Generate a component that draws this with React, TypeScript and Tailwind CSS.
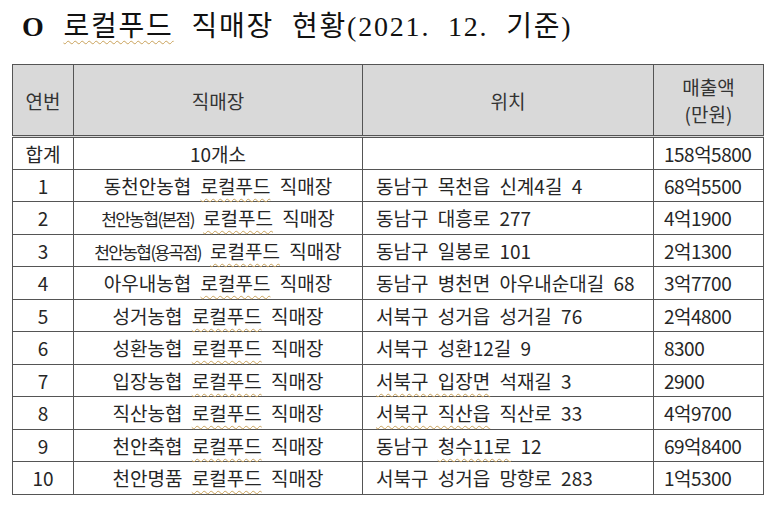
type Row = {
  no: string;
  name: string[]; // parts; index 1 is the squiggly one
  tight?: boolean;
  addr: { text: string; wavy?: boolean }[];
  sales: string;
};

const rows: Row[] = [
  { no: "1", name: ["동천안농협", "로컬푸드", "직매장"], addr: [{ text: "동남구 목천읍 신계4길 4" }], sales: "68억5500" },
  { no: "2", name: ["천안농협(본점)", "로컬푸드", "직매장"], tight: true, addr: [{ text: "동남구 대흥로 277" }], sales: "4억1900" },
  { no: "3", name: ["천안농협(용곡점)", "로컬푸드", "직매장"], tight: true, addr: [{ text: "동남구 일봉로 101" }], sales: "2억1300" },
  { no: "4", name: ["아우내농협", "로컬푸드", "직매장"], addr: [{ text: "동남구 병천면 아우내순대길 68" }], sales: "3억7700" },
  { no: "5", name: ["성거농협", "로컬푸드", "직매장"], addr: [{ text: "서북구 성거읍 성거길 76" }], sales: "2억4800" },
  { no: "6", name: ["성환농협", "로컬푸드", "직매장"], addr: [{ text: "서북구 성환12길 9" }], sales: "8300" },
  { no: "7", name: ["입장농협", "로컬푸드", "직매장"], addr: [{ text: "서북구 입장면", wavy: true }, { text: " 석재길 3" }], sales: "2900" },
  { no: "8", name: ["직산농협", "로컬푸드", "직매장"], addr: [{ text: "서북구 직산읍", wavy: true }, { text: " 직산로 33" }], sales: "4억9700" },
  { no: "9", name: ["천안축협", "로컬푸드", "직매장"], addr: [{ text: "동남구 " }, { text: "청수11로", wavy: true }, { text: " 12" }], sales: "69억8400" },
  { no: "10", name: ["천안명품", "로컬푸드", "직매장"], addr: [{ text: "서북구 성거읍 망향로 283" }], sales: "1억5300" },
];

const wavy = "underline decoration-wavy decoration-[#c9a25a] decoration-1 underline-offset-[4px]";
const cell = "border border-[#555] h-[32.5px] p-0 align-middle";

export default function App() {
  return (
    <div className="w-[773px] h-[507px] bg-white overflow-hidden text-[#262626]" style={{ fontFamily: '"Noto Sans CJK KR", sans-serif' }}>
      <h1
        className="pl-[22px] pt-[7px] h-[64px] text-[28px] leading-[40px] text-[#111] tracking-[1.8px] [word-spacing:9px]"
        style={{ fontFamily: '"Liberation Serif", "Noto Sans CJK KR", serif' }}
      >
        <span className="font-bold">O</span> <span className={wavy}>로컬푸드</span> 직매장 현황(2021. 12. 기준)
      </h1>

      <table className="ml-[12px] border-collapse table-fixed text-[19px] leading-none [word-spacing:5px]">
        <colgroup>
          <col className="w-[61px]" />
          <col className="w-[289px]" />
          <col className="w-[291px]" />
          <col className="w-[110px]" />
        </colgroup>
        <thead>
          <tr className="bg-[#d9d9d9] h-[72px] text-[#333]">
            <th className="border border-[#555] border-b-[3px] border-double font-normal">연번</th>
            <th className="border border-[#555] border-b-[3px] border-double font-normal">직매장</th>
            <th className="border border-[#555] border-b-[3px] border-double font-normal">위치</th>
            <th className="border border-[#555] border-b-[3px] border-double font-normal leading-[27px]">
              매출액
              <br />
              (만원)
            </th>
          </tr>
        </thead>
        <tbody>
          <tr>
            <td className={`${cell} text-center`}>합계</td>
            <td className={`${cell} text-center`}>10개소</td>
            <td className={cell}></td>
            <td className={`${cell} pl-[10px] tracking-[-0.5px]`}>158억5800</td>
          </tr>
          {rows.map((r) => (
            <tr key={r.no}>
              <td className={`${cell} text-center`}>{r.no}</td>
              <td className={`${cell} text-center`}>
                <span className={r.tight ? "text-[17px] tracking-[-1.6px]" : ""}>{r.name[0]}</span>{" "}
                <span className={wavy}>{r.name[1]}</span> {r.name[2]}
              </td>
              <td className={`${cell} pl-[13px]`}>
                {r.addr.map((a, i) => (
                  <span key={i} className={a.wavy ? wavy : ""}>
                    {a.text}
                  </span>
                ))}
              </td>
              <td className={`${cell} pl-[10px] tracking-[-0.5px]`}>{r.sales}</td>
            </tr>
          ))}
        </tbody>
      </table>
    </div>
  );
}
